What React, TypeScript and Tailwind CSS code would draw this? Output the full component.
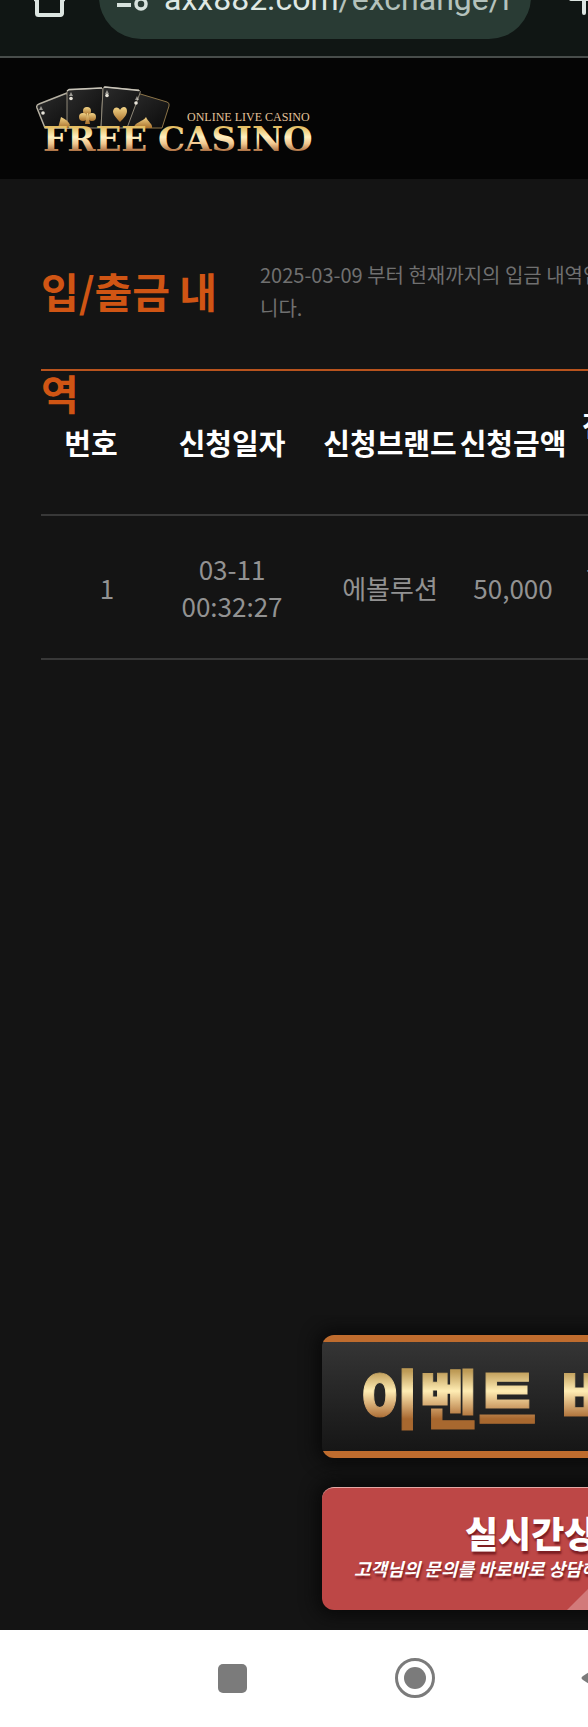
const SANS = "font-['Noto_Sans_CJK_KR',sans-serif]";

function BrowserBar() {
  return (
    <div className="flex h-[58px] items-end overflow-hidden border-b-2 border-[#484d4b] bg-[#101614] font-[Roboto,sans-serif]">
      <a href="#home" aria-label="Home" className="mb-[39px] ml-[34px] block shrink-0">
        <svg width="31" height="34" viewBox="0 0 31 34" fill="none" stroke="#dce5e1" strokeWidth="4" strokeLinejoin="round">
          <path d="M3 10V30.500a1.500 1.500 0 0 0 1.500 1.500H26.500a1.500 1.500 0 0 0 1.500-1.500V10" />
          <path d="M-1 17L15.500 2L32 17" />
        </svg>
      </a>
      <div className="mb-[17px] ml-[34px] flex h-[84px] w-[432px] shrink-0 items-end rounded-[42px] bg-[#293b34] pb-[20px] pl-[18px]">
        <svg width="32" height="32" viewBox="0 0 32 32" fill="none" stroke="#d7e2dd" strokeWidth="4" className="mb-[5px] shrink-0">
          <path d="M0 23H14" />
          <circle cx="24" cy="22" r="5" strokeWidth="3.500" />
          <path d="M14 4H30" />
          <circle cx="5" cy="4" r="5" />
        </svg>
        <span className="ml-[15px] whitespace-nowrap text-[32px] leading-[40px] text-[#dfe8e4]">
          axx882.com<span className="text-[#b4c2bc]">/exchange/l</span>
        </span>
      </div>
      <button type="button" aria-label="New tab" className="mb-[41px] ml-[38px] shrink-0">
        <svg width="30" height="30" viewBox="0 0 30 30" className="block" stroke="#dce5e1" strokeWidth="4" strokeLinecap="round">
          <path d="M15 2V28M2 14H28" />
        </svg>
      </button>
    </div>
  );
}

function Logo() {
  return (
    <a href="#main" aria-label="FREE CASINO" className="block w-[290px]">
      <svg width="290" height="72" viewBox="0 0 290 72">
        <defs>
          <linearGradient id="gold" x1="0" y1="0" x2="0" y2="1">
            <stop offset="0.2" stopColor="#e3bd62" />
            <stop offset="0.45" stopColor="#fff0c0" />
            <stop offset="0.62" stopColor="#f0c58e" />
            <stop offset="0.85" stopColor="#9a5b30" />
          </linearGradient>
          <linearGradient id="suit" x1="0" y1="0" x2="0" y2="1">
            <stop offset="0" stopColor="#f3d487" />
            <stop offset="1" stopColor="#a8702c" />
          </linearGradient>
          <linearGradient id="card" x1="0" y1="0" x2="1" y2="1">
            <stop offset="0" stopColor="#2c2c2c" />
            <stop offset="1" stopColor="#0b0b0b" />
          </linearGradient>
        </defs>
        <g fill="url(#card)" strokeLinejoin="round">
          <path d="M9 42L1 22Q0 19 3 18L31 7L42 42Z" stroke="#b5b0a2" strokeWidth="1.500" />
          <path d="M126 42L133 20Q134 17 131 16L101 7L90 42Z" stroke="#8c7448" />
          <path d="M31 42V6Q31 4 33 4L65 2Q67 2 67 4L65 42Z" stroke="#8f8878" />
          <path d="M65 42L67 3Q67 1 69 1L103 4Q105 5 104 7L91 42Z" stroke="#8f8878" />
          <path d="M31 5L33 3.500L66 2M68 1.500L69 1L103 4.500" fill="none" stroke="#c9c5ba" strokeWidth="1.500" />
        </g>
        <g fill="#e8e4da">
          <path d="M5 20l2 4h-4zM35 6l2 4h-4zM71 4l2 4h-4zM101 10l2 4h-4z" opacity="0.600" />
          <circle cx="7" cy="27" r="1.800" />
          <circle cx="35" cy="12.500" r="1.800" />
          <circle cx="71" cy="9.500" r="1.800" />
          <circle cx="100" cy="17" r="1.800" />
        </g>
        <g fill="url(#suit)">
          <path d="M25 31Q32 34 34 39L32 42H22Z" />
          <circle cx="51" cy="25" r="4" />
          <circle cx="47" cy="31" r="4" />
          <circle cx="56" cy="31" r="4" />
          <path d="M51 27h1l2 11h-5z" />
          <path d="M84 36C79 31 77 28 77 25C78 20 83 21 84 24C86 20 91 20 91 25C91 29 88 32 84 36Z" />
          <path d="M110 31C112 36 117 38 116 42H98C98 36 107 36 110 31Z" />
        </g>
        <g fill="url(#gold)" fontFamily="'DejaVu Serif', serif" fontSize="34" fontWeight="700">
          <text x="7" y="65">FREE</text>
          <text x="122" y="65">CASINO</text>
        </g>
        <text x="151" y="35" fontSize="12" fill="#e3c39a" fontFamily="'Liberation Serif', serif">ONLINE LIVE CASINO</text>
      </svg>
    </a>
  );
}

const columns = [
  { label: "번호", width: "w-[100px]" },
  { label: "신청일자", width: "w-[182px]" },
  { label: "신청브랜드", width: "w-[134px]" },
  { label: "신청금액", width: "w-[112px]" },
];

function History() {
  return (
    <main className="grow overflow-hidden pl-[41px]">
      <div className="w-[634px]">
        <div className="flex h-[192px] items-start border-b-2 border-[#b8531d] pt-[60px]">
          <h1 className="h-[110px] w-[219px] shrink-0 text-[41px] leading-[102px] font-bold text-[#d05514]">
            입/출금 내<br />역
          </h1>
          <p className="mt-[19px] whitespace-nowrap text-[20px] leading-[33px] text-[#707070]">
            2025-03-09 부터 현재까지의 입금 내역입<br />니다.
          </p>
        </div>
        <table className="w-full table-fixed border-collapse text-center">
          <thead>
            <tr className="h-[144px] border-b-2 border-[#383838] text-[29px] leading-[37px] font-bold text-white">
              {columns.map((c) => (
                <th key={c.label} scope="col" className={`${c.width} p-0 whitespace-nowrap`}>{c.label}</th>
              ))}
              <th scope="col" className="p-0">전환금<br />액</th>
            </tr>
          </thead>
          <tbody>
            <tr className="h-[144px] border-b-2 border-[#383838] text-[26px] leading-[37px] text-[#929292]">
              <td className="p-0 pl-[32px]">1</td>
              <td className="p-0">03-11<br />00:32:27</td>
              <td className="p-0">에볼루션</td>
              <td className="p-0">50,000</td>
              <td className="p-0">충전완<br />료</td>
            </tr>
          </tbody>
        </table>
      </div>
    </main>
  );
}

const goldText =
  "bg-linear-to-b from-[#bd9a55] from-20% via-[#ffedb4] via-45% to-[#a8682f] to-80% bg-clip-text text-transparent [-webkit-text-stroke:1px_transparent]";

function Banners() {
  return (
    <aside className="flex flex-col gap-[29px] overflow-hidden pt-[20px] pb-[20px] pl-[322px]">
      <a href="#event" className="block w-[440px] overflow-hidden rounded-[12px] shadow-[0_0_16px_6px_#0a0a0a]">
        <span className="flex h-[123px] items-center gap-[24px] border-y-[7px] border-[#bf6c2e] bg-linear-to-b from-[#353535] to-[#161616] pb-[4px] pl-[38px] text-[64px] leading-[80px] font-black whitespace-nowrap">
          <span className={goldText}>이벤트</span>
          <span className={goldText}>바로가기</span>
        </span>
      </a>
      <a href="#support" className="relative flex h-[123px] w-[440px] flex-col overflow-hidden rounded-[12px] border-t border-[#e4a9a6] bg-[#bd4746] pt-[22px] text-white shadow-[0_0_16px_6px_#0a0a0a]">
        <svg width="170" height="100" viewBox="0 0 170 100" className="absolute bottom-0 left-[245px]">
          <path d="M0 100L100 0H170V100Z" fill="#d27a7a" />
        </svg>
        <strong className="relative ml-[143px] text-[36px] leading-[44px] font-black whitespace-nowrap [text-shadow:1px_3px_2px_#7c1e22]">실시간상담</strong>
        <em className="relative ml-[32px] text-[18px] leading-[28px] font-bold whitespace-nowrap [text-shadow:1px_3px_2px_#7c1e22]">고객님의 문의를 바로바로 상담해드립니다</em>
      </a>
    </aside>
  );
}

function NavBar() {
  return (
    <nav className="h-[97px] overflow-hidden bg-white pt-[28px] pl-[218px]">
      <div className="flex w-[410px] items-center text-[#7b7b7b]">
        <button type="button" aria-label="Recent apps" className="size-[29px] shrink-0 rounded-[5px] bg-[#7b7b7b]" />
        <button type="button" aria-label="Home" className="ml-[148px] shrink-0">
          <svg width="40" height="40" viewBox="0 0 40 40" className="block">
            <circle cx="20" cy="20" r="18.500" fill="none" stroke="currentColor" strokeWidth="3" />
            <circle cx="20" cy="20" r="11" fill="currentColor" />
          </svg>
        </button>
        <button type="button" aria-label="Back" className="ml-[146px] shrink-0">
          <svg width="26" height="32" viewBox="0 0 26 32" className="block">
            <path d="M2 14L22 1Q26 0 26 4V28Q26 32 22 31L2 18Q-1 16 2 14Z" fill="currentColor" />
          </svg>
        </button>
      </div>
    </nav>
  );
}

export default function App() {
  return (
    <div className={`flex min-h-screen flex-col overflow-hidden bg-[#141414] ${SANS}`}>
      <BrowserBar />
      <header className="bg-[#050505] pt-[28px] pb-[21px] pl-[36px]">
        <Logo />
      </header>
      <History />
      <Banners />
      <NavBar />
    </div>
  );
}
